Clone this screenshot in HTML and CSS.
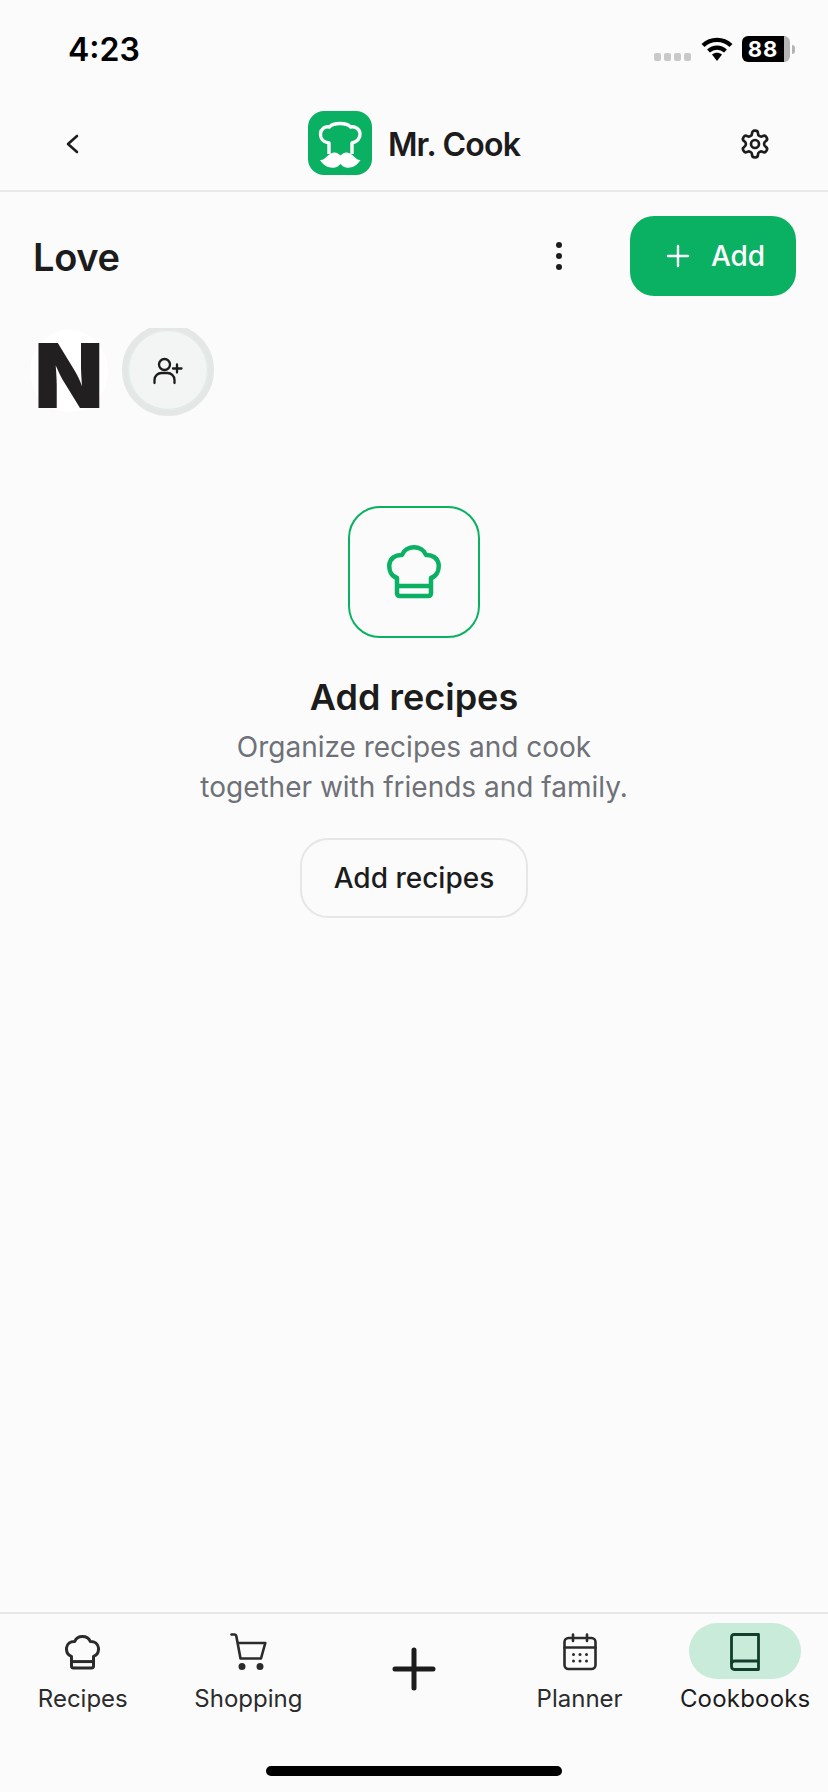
FILE: index.html
```html
<!DOCTYPE html>
<html lang="en">
<head>
    <meta charset="UTF-8">
    <meta name="viewport" content="width=device-width, initial-scale=1.0">
    <title>Mr. Cook</title>
    <link rel="stylesheet" href="styles.css">
</head>
<body>
    <div class="page">
        <div class="status-bar">
            <span class="time">4:23</span>
            <div class="status-icons">
                <div class="signal"><i></i><i></i><i></i><i></i></div>
                <svg class="wifi" width="32" height="26" viewBox="0 0 32 26">
                    <path d="M2 9.500C10 2 22 2 30 9.500" fill="none" stroke="#000" stroke-width="4.400"/>
                    <path d="M7.500 15C12.500 10.500 19.500 10.500 24.500 15" fill="none" stroke="#000" stroke-width="4.200"/>
                    <path d="M11 18.600C14 16 18 16 21 18.600L16 25Z" fill="#000"/>
                </svg>
                <div class="battery"><span class="battery-level">88</span></div>
                <div class="battery-nub"></div>
            </div>
        </div>

        <header class="header">
            <svg class="back" width="14" height="20" viewBox="0 0 14 20">
                <path d="M12 2L3 10L12 18" fill="none" stroke="#1c1c1c" stroke-width="2.600" stroke-linecap="round" stroke-linejoin="round"/>
            </svg>
            <div class="brand">
                <svg class="logo" width="64" height="64" viewBox="0 0 64 64">
                    <rect width="64" height="64" rx="16" fill="#0bb163"/>
                    <path d="M21 43V32C15 31 12 27 12.500 22.500C13 18 17 15 21.500 16C23.500 13.500 27.500 12.500 32 12.500C36.500 12.500 40.500 13.500 42.500 16C47 15 51.500 18 52 22.500C52.500 27 49 31 44 32V43" fill="none" stroke="#fff" stroke-width="3.400" stroke-linejoin="round"/>
                    <path d="M12 49C17 50 20 42 26 41.500C29 41.300 31 43 32.500 44.500C34 43 36 41.300 39 41.500C45 42 48 50 52.500 49C49 55 43 57.500 38 56.500C35.500 56 34 54.500 32.500 53C31 54.500 29.500 56 27 56.500C21.500 57.500 15.500 55 12 49Z" fill="#fff"/>
                </svg>
                <span class="brand-name">Mr. Cook</span>
            </div>
            <svg class="gear" width="32" height="32" viewBox="0 0 24 24" fill="none" stroke="#1c1c1c" stroke-width="2" stroke-linejoin="round">
                <path d="M12.220 2h-.44a2 2 0 0 0-2 2v.18a2 2 0 0 1-1 1.730l-.43.25a2 2 0 0 1-2 0l-.15-.08a2 2 0 0 0-2.730.73l-.22.38a2 2 0 0 0 .73 2.730l.15.1a2 2 0 0 1 1 1.720v.51a2 2 0 0 1-1 1.740l-.15.09a2 2 0 0 0-.73 2.730l.22.38a2 2 0 0 0 2.730.73l.15-.08a2 2 0 0 1 2 0l.43.25a2 2 0 0 1 1 1.730V20a2 2 0 0 0 2 2h.44a2 2 0 0 0 2-2v-.18a2 2 0 0 1 1-1.730l.43-.25a2 2 0 0 1 2 0l.15.08a2 2 0 0 0 2.730-.73l.22-.39a2 2 0 0 0-.73-2.730l-.15-.08a2 2 0 0 1-1-1.740v-.5a2 2 0 0 1 1-1.740l.15-.09a2 2 0 0 0 .73-2.730l-.22-.38a2 2 0 0 0-2.730-.73l-.15.08a2 2 0 0 1-2 0l-.43-.25a2 2 0 0 1-1-1.730V4a2 2 0 0 0-2-2z"/>
                <circle cx="12" cy="12" r="3"/>
            </svg>
        </header>

        <main class="content">
            <div class="title-row">
                <h1 class="title">Love</h1>
                <div class="more"><i></i><i></i><i></i></div>
                <button class="add-button">
                    <svg width="24" height="24" viewBox="0 0 24 24">
                        <path d="M12 2V22M2 12H22" stroke="#fff" stroke-width="2.400" stroke-linecap="round"/>
                    </svg>
                    <span>Add</span>
                </button>
            </div>

            <div class="members">
                <div class="avatar"><span class="avatar-letter">N</span></div>
                <div class="invite-clip">
                    <div class="invite">
                        <svg width="30" height="28" viewBox="0 0 30 28" fill="none" stroke="#1c1c1c" stroke-width="2.300" stroke-linecap="round">
                            <circle cx="11.500" cy="7.500" r="5.500"/>
                            <path d="M1.500 26V23C1.500 18.500 5 16 8.500 16H14.500C18 16 21.500 18.500 21.500 23V26"/>
                            <path d="M24 7.500V15.500M20 11.500H28.500"/>
                        </svg>
                    </div>
                </div>
            </div>

            <div class="empty">
                <div class="empty-icon">
                    <svg width="54" height="54" viewBox="0 0 54 54" fill="none" stroke="#0bb163" stroke-width="4.500" stroke-linejoin="round">
                        <path d="M10 33C4 31 2 25 2.300 20C3 13 9 9.500 15 10C17 5 22 2.300 27 2.300C32 2.300 37 5 39 10C45 9.500 51 13 51.700 20C52 25 50 31 44 33V48Q44 51 41 51H13Q10 51 10 48Z"/>
                        <path d="M10 41H44"/>
                    </svg>
                </div>
                <h2 class="empty-title">Add recipes</h2>
                <p class="empty-text">Organize recipes and cook<br>together with friends and family.</p>
                <button class="outline-button">Add recipes</button>
            </div>
        </main>

        <nav class="tabbar">
            <div class="tabs">
                <div class="tab">
                    <div class="tab-icon">
                        <svg width="35" height="35" viewBox="0 0 54 54" fill="none" stroke="#2b2b2b" stroke-width="4.600" stroke-linejoin="round">
                            <path d="M10 33C4 31 2 25 2.300 20C3 13 9 9.500 15 10C17 5 22 2.300 27 2.300C32 2.300 37 5 39 10C45 9.500 51 13 51.700 20C52 25 50 31 44 33V48Q44 51 41 51H13Q10 51 10 48Z"/>
                            <path d="M10 41H44"/>
                        </svg>
                    </div>
                    <span class="tab-label">Recipes</span>
                </div>
                <div class="tab">
                    <div class="tab-icon">
                        <svg width="37" height="38" viewBox="0 0 37 38" fill="none" stroke="#2b2b2b" stroke-width="2.600" stroke-linecap="round" stroke-linejoin="round">
                            <path d="M1.500 1.500H4.500C5.500 1.500 6 2 6.300 3L10.500 25.500H31L35.300 10H7.500"/>
                            <circle cx="12" cy="33.500" r="2.200" fill="#2b2b2b"/>
                            <circle cx="30" cy="33.500" r="2.200" fill="#2b2b2b"/>
                        </svg>
                    </div>
                    <span class="tab-label">Shopping</span>
                </div>
                <div class="tab tab-plus">
                    <svg width="44" height="44" viewBox="0 0 44 44">
                        <path d="M22 3V41M3 22H41" stroke="#1c1c1c" stroke-width="5" stroke-linecap="round"/>
                    </svg>
                </div>
                <div class="tab">
                    <div class="tab-icon">
                        <svg width="34" height="38" viewBox="0 0 34 38" fill="none" stroke="#2b2b2b" stroke-width="2.600" stroke-linecap="round" stroke-linejoin="round">
                            <rect x="1.500" y="5" width="31" height="31" rx="4"/>
                            <path d="M1.500 14.500H32.500M10 1.500V8M24 1.500V8"/>
                            <g fill="#2b2b2b" stroke="none">
                                <circle cx="10.500" cy="21.500" r="1.500"/><circle cx="17" cy="21.500" r="1.500"/><circle cx="23.500" cy="21.500" r="1.500"/>
                                <circle cx="10.500" cy="28" r="1.500"/><circle cx="17" cy="28" r="1.500"/><circle cx="23.500" cy="28" r="1.500"/>
                            </g>
                        </svg>
                    </div>
                    <span class="tab-label">Planner</span>
                </div>
                <div class="tab">
                    <div class="tab-icon tab-icon-active">
                        <svg width="30" height="38" viewBox="0 0 30 38" fill="none" stroke="#123f2b" stroke-width="2.800" stroke-linejoin="round">
                            <path d="M4 1.500H28.500V36.500H4.500Q1.500 36.500 1.500 33.500V4Q1.500 1.500 4 1.500Z"/>
                            <path d="M1.500 31Q1.500 28 4.500 28H28.500"/>
                        </svg>
                    </div>
                    <span class="tab-label tab-label-active">Cookbooks</span>
                </div>
            </div>
            <div class="home-indicator"></div>
        </nav>
    </div>
</body>
</html>
```

FILE: styles.css
```css
body {
    background-color: #fbfbfb;
    font-family: Inter, "Liberation Sans", sans-serif;
    color: #1c1c1c;
    margin: 0;
    padding: 0;
}
.page {
    display: flex;
    flex-direction: column;
    height: 1792px;
    overflow: hidden;
}
.status-bar {
    display: flex;
    justify-content: space-between;
    align-items: center;
    height: 98px;
    box-sizing: border-box;
    padding: 0 33px 0 68px;
    margin-bottom: -3px;
}
.time {
    font-size: 32px;
    font-weight: 600;
    color: #000;
}
.status-icons {
    display: flex;
    align-items: center;
}
.signal {
    display: flex;
    gap: 3px;
    margin: 16px 10px 0 0;
}
.signal i {
    width: 7px;
    height: 8px;
    border-radius: 2px;
    background: #c9c9c9;
}
.wifi {
    margin-right: 9px;
}
.battery {
    width: 48px;
    height: 26px;
    box-sizing: border-box;
    border-right: 6px solid #b5b5b5;
    border-radius: 6px;
    background: #000;
    display: flex;
    align-items: center;
    justify-content: center;
}
.battery-level {
    color: #fff;
    font-size: 22px;
    font-weight: 700;
    letter-spacing: 1px;
}
.battery-nub {
    width: 3px;
    height: 9px;
    margin-left: 2px;
    border-radius: 0 3px 3px 0;
    background: #b5b5b5;
}
.header {
    display: grid;
    grid-template-columns: 1fr auto 1fr;
    align-items: center;
    height: 97px;
    box-sizing: border-box;
    padding: 2px 57px 0 57px;
    border-bottom: 2px solid #e8e8e8;
}
.back {
    margin-left: 8px;
}
.gear {
    justify-self: end;
}
.brand {
    display: flex;
    align-items: center;
    gap: 16px;
    margin-top: -2px;
}
.brand-name {
    margin-top: 3px;
    font-size: 32px;
    font-weight: 600;
    letter-spacing: -0.8px;
}
.content {
    flex: 1;
}
.title-row {
    display: flex;
    align-items: center;
    padding: 24px 32px 0 33px;
}
.title {
    flex: 1;
    margin: 2px 0 0;
    font-size: 38px;
    font-weight: 600;
    letter-spacing: -0.3px;
}
.more {
    display: flex;
    flex-direction: column;
    gap: 5px;
    margin-right: 68px;
}
.more i {
    width: 6px;
    height: 6px;
    border-radius: 50%;
    background: #1c1c1c;
}
.add-button {
    display: flex;
    align-items: center;
    justify-content: center;
    gap: 21px;
    width: 166px;
    height: 80px;
    padding: 0 0 0 5px;
    border: none;
    border-radius: 24px;
    background-color: #0bb163;
    color: #fff;
    font-family: inherit;
    font-size: 28px;
    font-weight: 500;
}
.members {
    display: flex;
    gap: 14px;
    height: 88px;
    margin-top: 32px;
    padding-left: 30px;
}
.avatar {
    flex: none;
    width: 78px;
    height: 82px;
    margin-top: 2px;
    border-radius: 50%;
    background: #fff;
    display: flex;
    align-items: center;
    justify-content: center;
}
.avatar-letter {
    margin-top: 9px;
    font-size: 90px;
    font-weight: 900;
    color: #221f20;
    line-height: 70px;
}
.invite-clip {
    flex: none;
    width: 92px;
    height: 88px;
    overflow: hidden;
}
.invite {
    width: 92px;
    height: 92px;
    margin-top: -4px;
    box-sizing: border-box;
    border: 6px solid #e5e7e6;
    border-radius: 50%;
    background: #f3f4f4;
    box-shadow: inset 0 0 0 1px #dcebe6;
    display: flex;
    align-items: center;
    justify-content: center;
}
.invite svg {
    margin-top: 2px;
}
.empty {
    display: flex;
    flex-direction: column;
    align-items: center;
    margin-top: 90px;
}
.empty-icon {
    width: 132px;
    height: 132px;
    box-sizing: border-box;
    border: 2px solid #0bb163;
    border-radius: 32px;
    display: flex;
    align-items: center;
    justify-content: center;
}
.empty-title {
    margin: 36px 0 0;
    font-size: 36px;
    line-height: 46px;
    font-weight: 600;
}
.empty-text {
    margin: 7px 0 0;
    font-size: 28px;
    line-height: 40px;
    text-align: center;
    color: #6e7178;
}
.outline-button {
    width: 228px;
    height: 80px;
    margin-top: 31px;
    background: transparent;
    border: 2px solid #e6e6e6;
    border-radius: 28px;
    color: #1c1c1c;
    font-family: inherit;
    font-size: 28px;
    font-weight: 500;
}
.tabbar {
    height: 180px;
    box-sizing: border-box;
    border-top: 2px solid #e8e8e8;
    display: flex;
    flex-direction: column;
    align-items: center;
}
.tabs {
    display: grid;
    grid-template-columns: repeat(5, 1fr);
    width: 100%;
    padding-top: 9px;
}
.tab {
    display: flex;
    flex-direction: column;
    align-items: center;
}
.tab-plus {
    box-sizing: border-box;
    height: 88px;
    padding-top: 24px;
}
.tab-icon {
    display: flex;
    align-items: center;
    justify-content: center;
    width: 112px;
    height: 56px;
    border-radius: 28px;
}
.tab-icon svg {
    margin-top: 2px;
}
.tab-label {
    margin-top: 4px;
    font-size: 24px;
    line-height: 32px;
    color: #2b2b2b;
}
.tab-icon-active {
    background: #c9ebda;
}
.tab-label-active {
    color: #1c1c1c;
    letter-spacing: 0.2px;
}
.home-indicator {
    width: 296px;
    height: 10px;
    margin-top: 51px;
    border-radius: 5px;
    background: #000;
}
```
